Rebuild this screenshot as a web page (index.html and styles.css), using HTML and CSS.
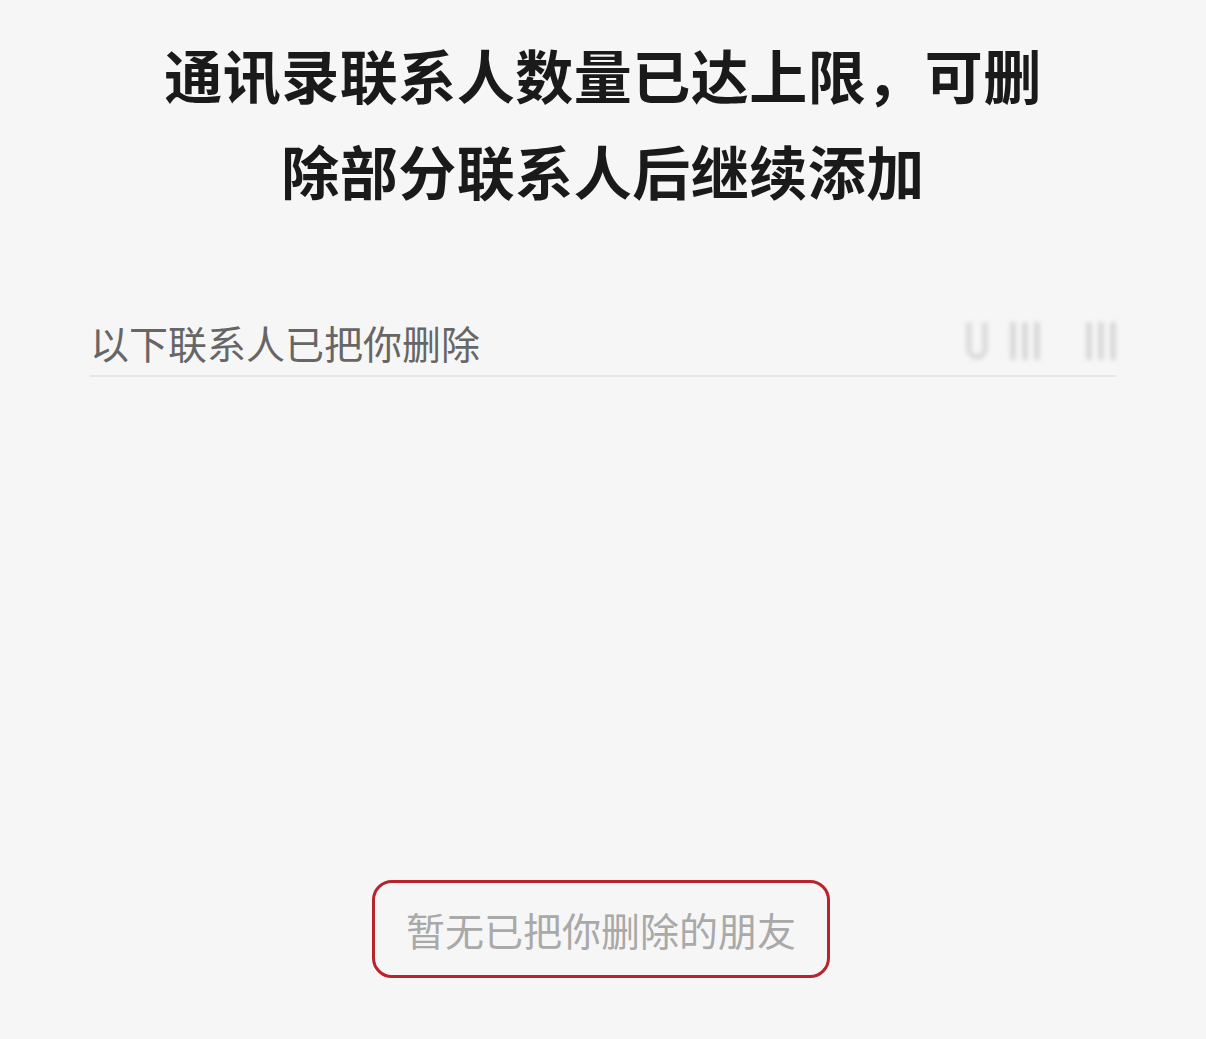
FILE: index.html
```html
<!DOCTYPE html>
<html lang="zh-CN">
<head>
  <meta charset="UTF-8">
  <title>已把你删除的联系人</title>
  <link rel="stylesheet" href="styles.css">
</head>
<body>
  <h1 class="notice">通讯录联系人数量已达上限，可删<br>除部分联系人后继续添加</h1>

  <div class="list">
    <div class="list-head">
      <span class="list-title">以下联系人已把你删除</span>
      <!-- blurred leftover glyphs on the right -->
      <span class="ghost">
        <i class="cup"></i><i class="bar"></i><i class="bar"></i><i class="bar"></i>
        <i class="gap"></i><i class="bar"></i><i class="bar"></i><i class="bar"></i>
      </span>
    </div>
  </div>

  <div class="empty">暂无已把你删除的朋友</div>
</body>
</html>
```

FILE: styles.css
```css
html {
  box-sizing: border-box;
  background: #f6f6f6;
}

*, *:before, *:after {
  box-sizing: inherit;
}

body {
  margin: 0;
  min-height: 100vh;
  font-family: "Noto Sans CJK SC", "Noto Sans", sans-serif;
  color: #1a1a1a;
}

.notice {
  margin: 0;
  padding-top: 26px;
  text-align: center;
  font-size: 58px;
  line-height: 96px;
  font-weight: 600;
  letter-spacing: 0.5px;
}

.list {
  margin: 94px 90px 0;
  border-bottom: 2px solid #e6e6e6;
}

.list-head {
  display: flex;
  justify-content: space-between;
  align-items: center;
  height: 63px;
}

.list-title {
  font-size: 39px;
  line-height: 60px;
  color: #666;
  margin-top: -4px;
}

.ghost {
  display: flex;
  align-items: flex-end;
  gap: 6px;
  height: 38px;
  margin-top: -6px;
  filter: blur(2px);
  opacity: 0.5;
}

.ghost i {
  display: block;
  height: 100%;
  background: #bdbdbd;
}

.ghost .cup {
  width: 22px;
  margin-right: 16px;
  background: none;
  border: 6px solid #c4c4c4;
  border-top: none;
  border-radius: 0 0 11px 11px;
}

.ghost .bar { width: 6px; }
.ghost .gap { width: 34px; background: none; }

.empty {
  width: 458px;
  height: 98px;
  margin: 503px auto 0;
  display: flex;
  align-items: center;
  justify-content: center;
  border: 3px solid #b8232c;
  border-radius: 20px;
  font-size: 39px;
  color: #a9a9a9;
  transform: translateX(-2px);
}
```
